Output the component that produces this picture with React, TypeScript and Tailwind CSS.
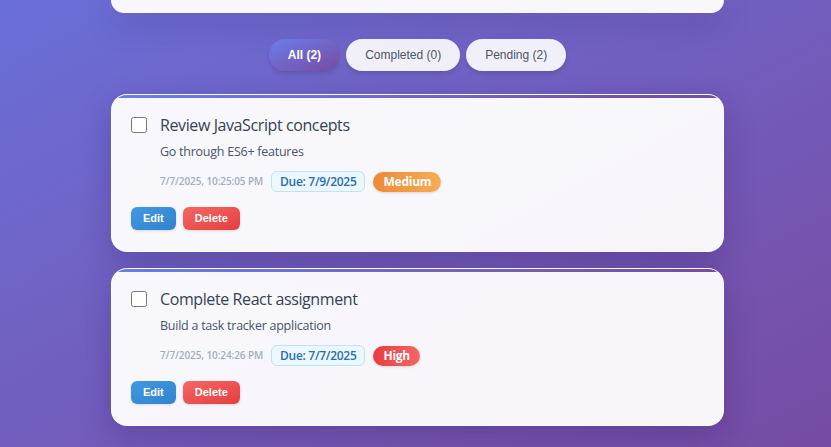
import { useState } from "react";

type Task = {
  id: number;
  title: string;
  description: string;
  createdAt: string;
  due: string;
  priority: "High" | "Medium" | "Low";
  done: boolean;
};

const tasks: Task[] = [
  {
    id: 2,
    title: "Review JavaScript concepts",
    description: "Go through ES6+ features",
    createdAt: "7/7/2025, 10:25:05 PM",
    due: "7/9/2025",
    priority: "Medium",
    done: false,
  },
  {
    id: 1,
    title: "Complete React assignment",
    description: "Build a task tracker application",
    createdAt: "7/7/2025, 10:24:26 PM",
    due: "7/7/2025",
    priority: "High",
    done: false,
  },
];

const body = { fontFamily: '"Open Sans", "Noto Sans", sans-serif' };
const btn = { fontFamily: '"Liberation Sans", Arial, sans-serif' };

function PriorityBadge({ p }: { p: Task["priority"] }) {
  const cls =
    p === "High"
      ? "bg-gradient-to-r from-[#e53e3e] to-[#f56565]"
      : p === "Medium"
        ? "bg-gradient-to-r from-[#ed8936] to-[#f6ad55]"
        : "bg-gradient-to-r from-[#38a169] to-[#68d391]";
  return (
    <span
      className={`${cls} rounded-full px-[10px] py-[2px] text-[12px] font-bold leading-[16px] tracking-[-0.02em] text-white shadow-sm`}
    >
      {p}
    </span>
  );
}

function TaskCard({ task }: { task: Task }) {
  const [done, setDone] = useState(task.done);
  return (
    <div className="overflow-hidden rounded-2xl border border-white/70 bg-white/95 shadow-[0_10px_30px_rgba(40,20,90,0.25)]">
      <div className="h-[3px] bg-gradient-to-r from-[#667eea] to-[#764ba2]" />
      <div className="px-[19px] pb-[21px] pt-4">
        <div className="flex items-start gap-[13px]">
          <input
            type="checkbox"
            checked={done}
            onChange={() => setDone(!done)}
            className="mt-[3px] h-4 w-4 shrink-0"
          />
          <div className="flex flex-col">
            <h3 className="text-[16px] font-medium leading-[22px] tracking-[-0.025em] text-[#374151]">
              {task.title}
            </h3>
            <p className="mt-[7px] text-[12.5px] leading-[18px] tracking-[-0.02em] text-[#4a5568]">
              {task.description}
            </p>
            <div className="mt-[10px] flex items-center gap-2">
              <span className="text-[10px] font-semibold tracking-[-0.01em] text-[#a0aec0]">
                {task.createdAt}
              </span>
              <span className="rounded-md border border-[#bee3f8] bg-[#ebf8ff] px-[8px] py-[1px] text-[12px] font-semibold leading-[17px] tracking-[-0.025em] text-[#2b6cb0]">
                Due: {task.due}
              </span>
              <PriorityBadge p={task.priority} />
            </div>
          </div>
        </div>
        <div className="mt-[15px] flex gap-[7px]" style={btn}>
          <button className="rounded-md bg-gradient-to-br from-[#4299e1] to-[#3182ce] px-3 py-[5px] text-[11px] font-bold leading-[13px] text-white shadow-sm">
            Edit
          </button>
          <button className="rounded-md bg-gradient-to-br from-[#f56565] to-[#e53e3e] px-3 py-[5px] text-[11px] font-bold leading-[13px] text-white shadow-sm">
            Delete
          </button>
        </div>
      </div>
    </div>
  );
}

export default function App() {
  const [filter, setFilter] = useState("all");
  const filters = [
    { key: "all", label: "All (2)" },
    { key: "completed", label: "Completed (0)" },
    { key: "pending", label: "Pending (2)" },
  ];
  return (
    <div
      className="min-h-screen bg-gradient-to-br from-[#6a6fd8] to-[#764ba2] pl-[4px]"
      style={body}
    >
      <div className="mx-auto w-[613px] pb-6">
        <div className="h-[13px] rounded-b-2xl bg-white/95 shadow-[0_10px_30px_rgba(40,20,90,0.25)]" />
        <div className="mt-[26px] flex justify-center gap-[6px]" style={btn}>
          {filters.map((f) =>
            f.key === filter ? (
              <button
                key={f.key}
                onClick={() => setFilter(f.key)}
                className="h-8 rounded-full bg-gradient-to-br from-[#667eea] to-[#764ba2] px-[19px] text-[12px] font-bold text-white shadow-md"
              >
                {f.label}
              </button>
            ) : (
              <button
                key={f.key}
                onClick={() => setFilter(f.key)}
                className="h-8 rounded-full bg-white/90 px-[19px] text-[12px] font-medium text-[#4a5568] shadow-md"
              >
                {f.label}
              </button>
            ),
          )}
        </div>
        <div className="mt-[23px] flex flex-col gap-4">
          {tasks.map((t) => (
            <TaskCard key={t.id} task={t} />
          ))}
        </div>
      </div>
    </div>
  );
}
